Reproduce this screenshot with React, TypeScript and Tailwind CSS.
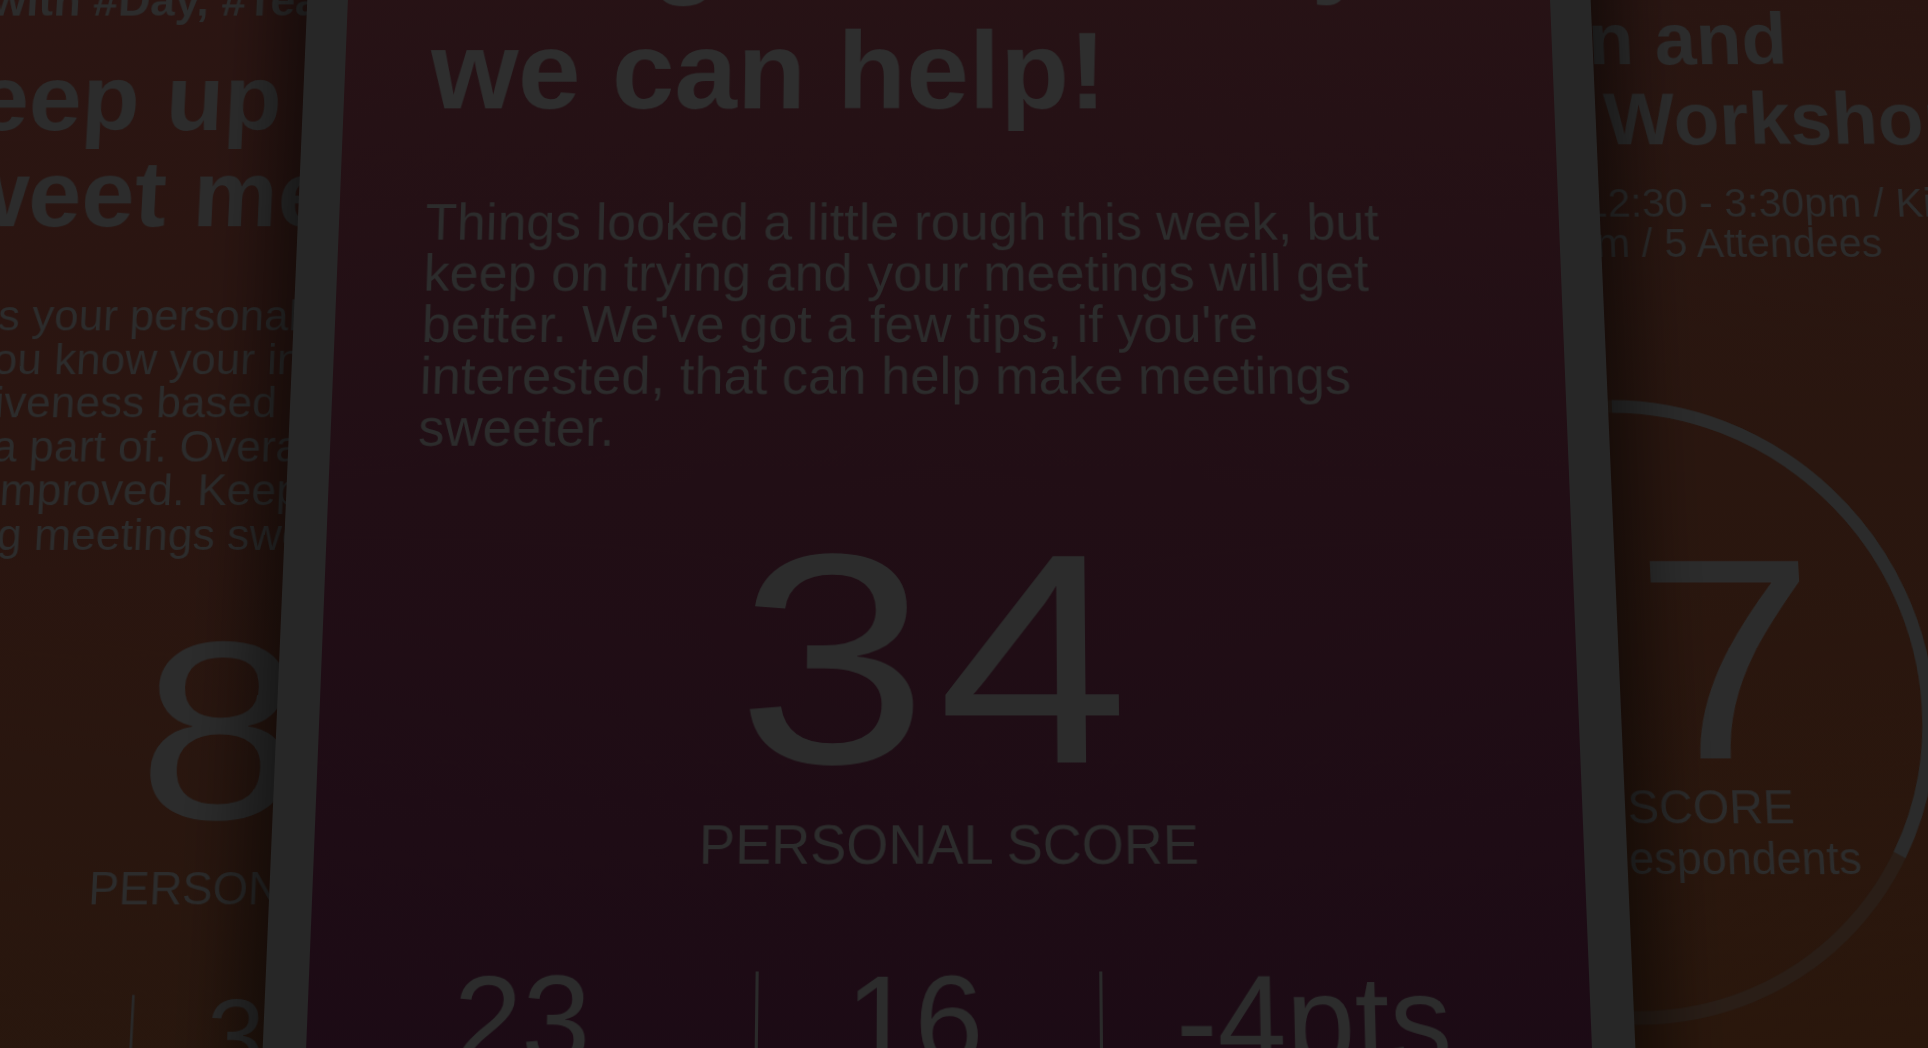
const ink = "text-[#2c2c2c]";

function StatsRow({ items }: { items: [string, string, string] }) {
  return (
    <div className="mt-[81px] flex shrink-0 items-start text-[120px] leading-none">
      <div className="w-[434px] shrink-0 pr-[18px] text-center">{items[0]}</div>
      <div className="mt-[14px] h-[150px] w-[3px] shrink-0 bg-[#2a2a2a]" />
      <div className="w-[331px] shrink-0 pr-[28px] text-center">{items[1]}</div>
      <div className="mt-[14px] h-[150px] w-[3px] shrink-0 bg-[#2a2a2a]" />
      <div className="flex-1 pr-[64px] text-center">{items[2]}</div>
    </div>
  );
}

function ScoreBlock({
  value,
  stats,
  numberPad,
}: {
  value: string;
  stats: [string, string, string];
  numberPad: string;
}) {
  return (
    <>
      <div className={`mt-[57px] flex shrink-0 justify-center text-[296px] leading-none tracking-[8px] ${numberPad}`}>
        <span className="inline-block scale-x-[1.15]">{value}</span>
      </div>
      <div className="mt-[7px] shrink-0 text-center text-[53px] leading-none">PERSONAL SCORE</div>
      <StatsRow items={stats} />
    </>
  );
}

function LeftPhone() {
  return (
    <div className="-ml-[350px] -mt-[500px] h-[1700px] w-[1328px] shrink-0 origin-[50%_1600px] scale-[0.84] bg-[#262626] p-[42px]">
      <div className={`flex h-full flex-col bg-linear-to-b from-[#2b1513] via-[#2a1510] to-[#28170d] ${ink}`}>
        <div className="flex h-[911px] shrink-0 flex-col justify-end pl-[104px] pr-[88px]">
          <p className="mb-[36px] text-[55px] font-bold leading-none">1:1 with #Day, #Team</p>
          <h2 className="text-[116px] font-bold leading-[120px]">
            Keep up the
            <br />
            sweet meetings
          </h2>
          <p className="mt-[64px] text-[53px] leading-[53px]">
            This is your personal score. It
            <br />
            lets you know your individual
            <br />
            effectiveness based on meetings you
            <br />
            were a part of. Overall, you
            <br />
            have improved. Keep on
            <br />
            making meetings sweeter.
          </p>
        </div>
        <ScoreBlock value="86" stats={["12", "31", "+6pts"]} numberPad="pl-[8px]" />
      </div>
    </div>
  );
}

function CenterPhone() {
  return (
    <div className="relative z-10 -ml-[693px] -mt-[200px] h-[1400px] w-[1328px] shrink-0 rounded-[64px] bg-[#272727] p-[42px] shadow-[0_0_70px_26px_rgba(0,0,0,0.55)]">
      <div className={`flex h-full flex-col bg-linear-to-b from-[#281315] via-[#210e15] to-[#1b0a15] ${ink}`}>
        <div className="flex h-[611px] shrink-0 flex-col justify-end px-[88px]">
          <h1 className="text-[116px] font-bold leading-[134px] text-[#2e2e2e]">
            Rough luck today,
            <br />
            we can help!
          </h1>
          <p className="mt-[66px] text-[53px] leading-[53px]">
            Things looked a little rough this week, but keep on trying and your meetings will get
            better. We&apos;ve got a few tips, if you&apos;re interested, that can help make meetings
            sweeter.
          </p>
        </div>
        <ScoreBlock value="34" stats={["23", "16", "-4pts"]} numberPad="pr-[22px]" />
      </div>
    </div>
  );
}

function RightPhone() {
  const r = 300;
  const c = 2 * Math.PI * r;
  return (
    <div className={`-ml-[193px] -mt-[200px] h-[1400px] w-[900px] shrink-0 bg-linear-to-b from-[#291512] to-[#2a170b] pt-[179px] ${ink}`}>
      <div className="pl-[73px]">
        <h2 className="text-[77px] font-bold leading-[85px]">
          Plan and
          <br />
          UX Workshop
        </h2>
        <p className="mt-[25px] text-[42px] leading-[42px]">
          Mon, 12:30 - 3:30pm / Kitchen
          <br />
          A Room / 5 Attendees
        </p>
      </div>
      <div className="relative -ml-[115px] mt-[135px] h-[624px] w-[624px]">
        <svg className="absolute inset-0" width="624" height="624" viewBox="0 0 624 624">
          <circle cx="312" cy="312" r={r} fill="none" stroke="#2a1e17" strokeWidth="13" />
          <circle
            cx="312"
            cy="312"
            r={r}
            fill="none"
            stroke="#2b2b2b"
            strokeWidth="13"
            strokeDasharray={`${c * 0.33} ${c}`}
            transform="rotate(-90 312 312)"
          />
        </svg>
        <div className="relative flex flex-col items-center pl-[20px] pt-[124px]">
          <div className="pl-[8px] text-[283px] leading-none tracking-[8px]">
            <span className="inline-block scale-x-[1.15]">37</span>
          </div>
          <div className="-mt-[20px] text-[46px] leading-none">TEAM SCORE</div>
          <div className="mt-[5px] text-[44px] leading-none">12 of 15 Respondents</div>
        </div>
      </div>
    </div>
  );
}

export default function App() {
  return (
    <div className="h-[1048px] w-[1928px] overflow-hidden bg-[#1c0d0f] font-['Liberation_Sans',Arial,sans-serif]">
      <div className="flex h-[1048px] w-[1928px] origin-[948px_524px] items-start [transform:perspective(1500px)_rotateX(5.5deg)]">
        <LeftPhone />
        <CenterPhone />
        <RightPhone />
      </div>
    </div>
  );
}
